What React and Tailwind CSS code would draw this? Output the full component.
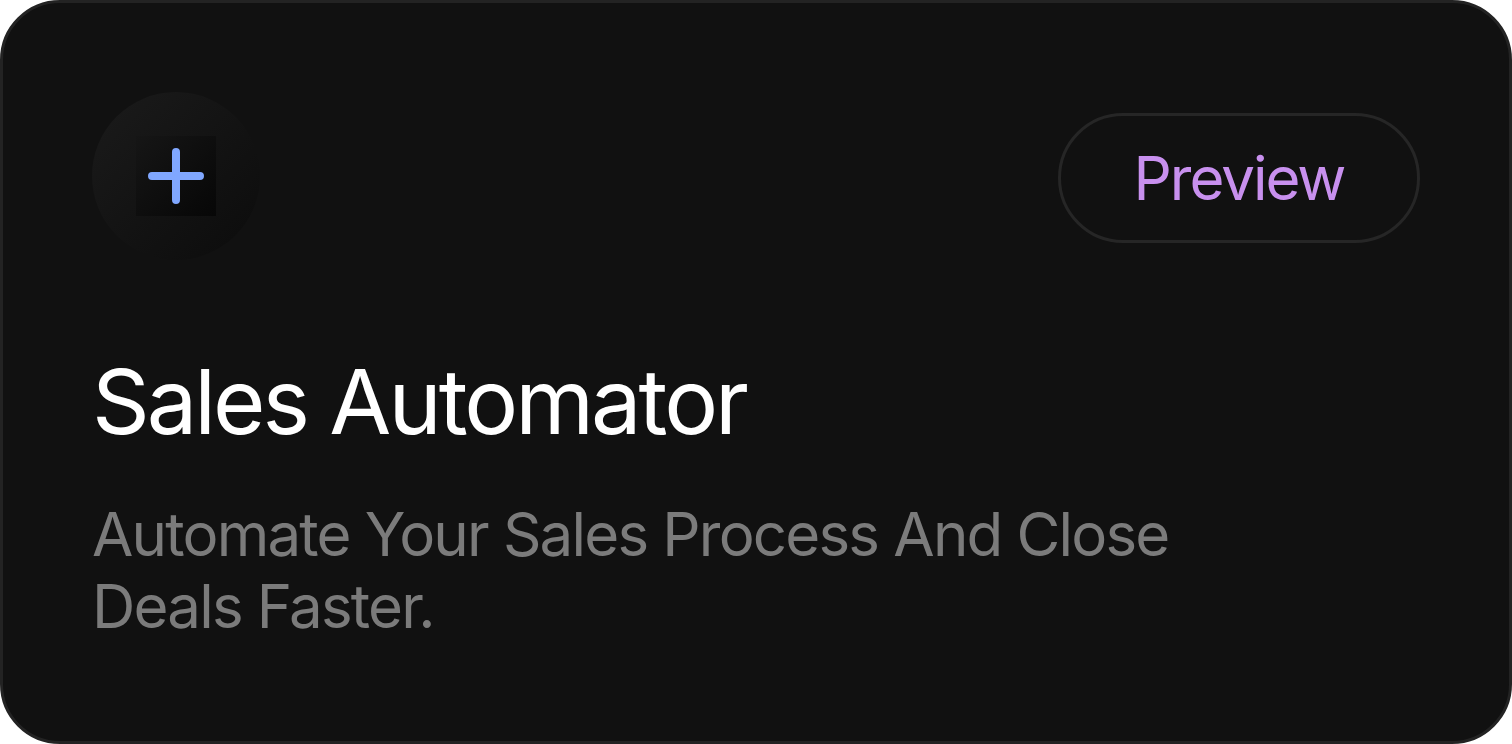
export default function App() {
  return (
    <div className="bg-white w-[1512px] h-[744px]" style={{ fontFamily: "Inter, 'Noto Sans', sans-serif" }}>
      <div className="w-full h-full rounded-[60px] border-[3px] border-[#232323] bg-[#111111] px-[89px] pt-[89px] flex flex-col">
        <div className="flex items-center justify-between">
          <div className="w-[168px] h-[168px] rounded-full bg-gradient-to-br from-[#1b1b1b] to-[#0c0c0c] flex items-center justify-center">
            <div className="w-[80px] h-[80px] bg-gradient-to-br from-[#161616] to-[#070707] flex items-center justify-center">
              <svg width="56" height="56" viewBox="0 0 56 56" fill="none">
                <path d="M28 4v48M4 28h48" stroke="#80a7ff" strokeWidth="8" strokeLinecap="round" />
              </svg>
            </div>
          </div>
          <button className="w-[362px] h-[130px] mt-[4px] rounded-full border-[3px] border-[#262626] flex items-center justify-center text-[60px] text-[#c890ee] tracking-[-2px]">
            Preview
          </button>
        </div>
        <h1 className="mt-[88px] text-[90px] leading-[108px] text-white font-normal tracking-[-3px]">Sales Automator</h1>
        <p className="mt-[42px] max-w-[1150px] text-[60px] leading-[72px] text-[#7b7b7b] tracking-[-1.8px]">
          Automate Your Sales Process And Close Deals Faster.
        </p>
      </div>
    </div>
  );
}
